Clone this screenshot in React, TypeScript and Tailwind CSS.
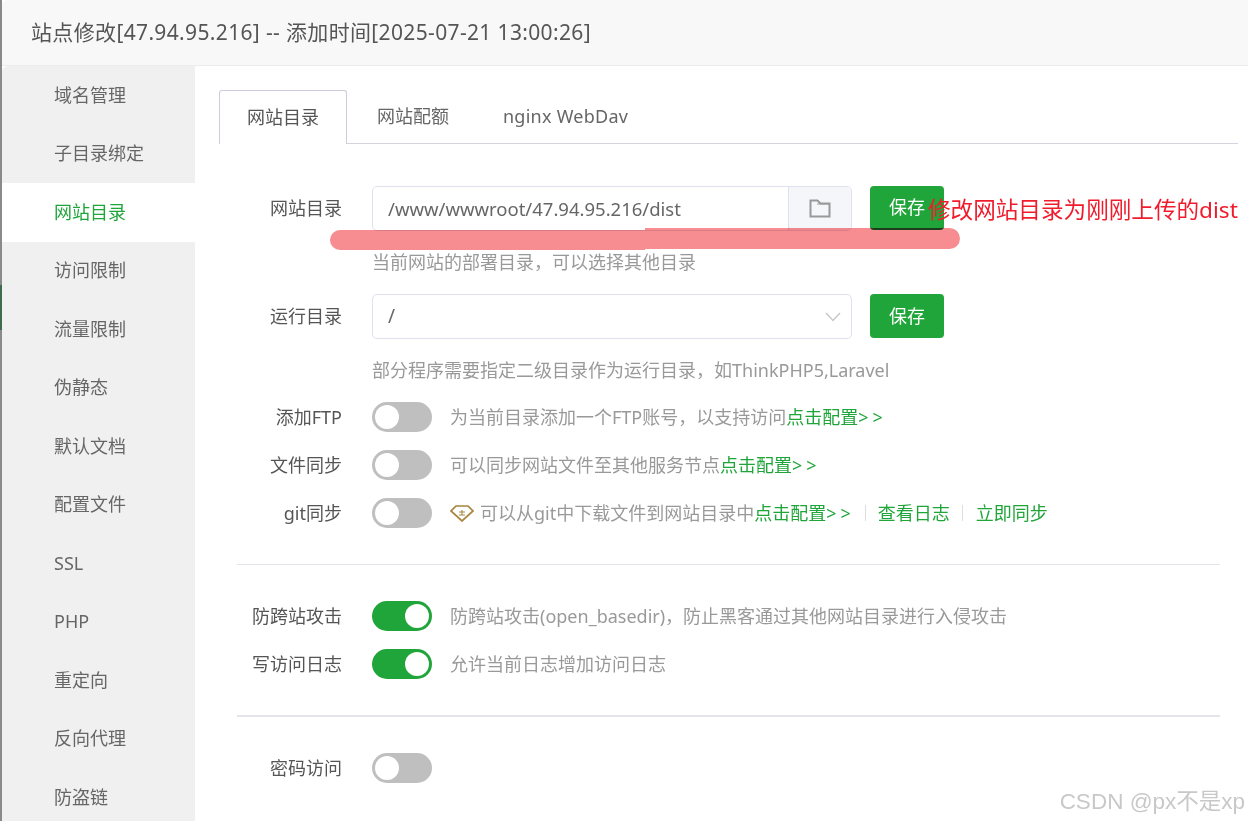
import React from "react";

const FONT = "font-['Noto_Sans','Noto_Sans_CJK_SC',sans-serif]";
const nav = ["域名管理","子目录绑定","网站目录","访问限制","流量限制","伪静态","默认文档","配置文件","SSL","PHP","重定向","反向代理","防盗链"];

function Toggle({ on }: { on?: boolean }) {
  return (
    <div className={`w-[60px] h-[30px] rounded-full flex items-center shrink-0 px-[3px] ${on ? "bg-[#20a53a] justify-end" : "bg-[#bfbfbf] justify-start"}`}>
      <div className="w-6 h-6 rounded-full bg-white" />
    </div>
  );
}

function Label({ children }: { children: React.ReactNode }) {
  return <div className="w-[123px] text-right text-[18px] text-[#555] shrink-0 mr-[30px]">{children}</div>;
}

function SaveBtn({ shade }: { shade?: boolean }) {
  return (
    <div className={`w-[74px] h-[44px] rounded bg-[#20a53a] text-white text-[18px] flex items-center justify-center ml-[18px] ${shade ? "border-b-2 border-[#1c6f2e]" : ""}`}>保存</div>
  );
}

function ToggleRow({ label, on, children }: { label: string; on?: boolean; children: React.ReactNode }) {
  return (
    <div className="flex items-center h-[48px]">
      <Label>{label}</Label>
      <Toggle on={on} />
      <div className="ml-[18px] text-[18px] text-[#999] flex items-center whitespace-nowrap">{children}</div>
    </div>
  );
}

const G = ({ children }: { children: React.ReactNode }) => <span className="text-[#20a53a]">{children}</span>;
const Arrows = () => <span className="text-[#20a53a] tracking-[4px]">&gt;&gt;</span>;

export default function App() {
  return (
    <div className={`relative w-[1248px] h-[821px] overflow-hidden bg-white pl-[2px] ${FONT}`}>
      <div className="absolute left-0 top-0 bottom-0 w-[2px] bg-[#8a8a8a]" />
      <div className="absolute left-0 top-[285px] h-[45px] w-[2px] bg-[#3f6b4f]" />
      <header className="h-[66px] bg-[#f8f8f8] border-b border-[#ececec] rounded-tl-[6px] flex items-center pl-[29px] text-[21px] tracking-[0.35px] text-[#555] whitespace-nowrap">
        站点修改[47.94.95.216] -- 添加时间[2025-07-21 13:00:26]
      </header>
      <div className="flex h-[755px]">
        <aside className="w-[193px] bg-[#f0f0f0] shrink-0 rounded-tl-[6px]">
          {nav.map((n) => (
            <div key={n} className={`h-[58.5px] flex items-center pl-[52px] text-[18px] ${n === "网站目录" ? "bg-white text-[#20a53a]" : "text-[#666]"}`}>{n}</div>
          ))}
        </aside>
        <main className="flex-1 pl-[24px] pr-[10px] pt-[24px]">
          <div className="flex h-[54px] border-b border-[#d5d3e0] text-[18px] text-[#666]">
            <div className="w-[128px] h-[54px] border border-b-0 border-[#cfcbdc] rounded-t-[3px] bg-white flex items-center justify-center text-[#555]">网站目录</div>
            <div className="w-[132px] flex items-center justify-center">网站配额</div>
            <div className="pl-[24px] flex items-center tracking-[0.25px]">nginx WebDav</div>
          </div>

          <div className="mt-[42px] flex items-start">
            <div className="flex items-center h-[45px]"><Label>网站目录</Label></div>
            <div className="w-[480px] h-[45px] border border-[#dfe1ec] rounded-[5px] flex overflow-hidden">
              <div className="flex-1 flex items-center pl-[15px] text-[18.5px] text-[#666]">/www/wwwroot/47.94.95.216/dist</div>
              <div className="w-[63px] bg-[#f5f6fa] border-l border-[#dfe1ec] flex items-center justify-center">
                <svg width="22" height="19" viewBox="0 0 22 19" fill="none" stroke="#999" strokeWidth="2"><path d="M1.5 17.5V1.5h7l3 3h9v13z" /><path d="M8 5h12" strokeWidth="1" /></svg>
              </div>
            </div>
            <SaveBtn shade />
          </div>
          <div className="ml-[153px] mt-[18px] h-[27px] text-[18px] text-[#999] leading-[27px]">当前网站的部署目录，可以选择其他目录</div>

          <div className="mt-[18px] flex items-start">
            <div className="flex items-center h-[45px]"><Label>运行目录</Label></div>
            <div className="w-[480px] h-[45px] border border-[#dfe1ec] rounded-[5px] flex items-center justify-between pl-[15px] pr-[10px] text-[19px] text-[#666]">
              <span>/</span>
              <svg width="16" height="10" viewBox="0 0 16 10" fill="none" stroke="#c8c8c8" strokeWidth="1.5"><path d="M1 1l7 7.5L15 1" /></svg>
            </div>
            <SaveBtn />
          </div>
          <div className="ml-[153px] mt-[18px] h-[27px] text-[18px] text-[#999] leading-[27px] whitespace-nowrap">部分程序需要指定二级目录作为运行目录，如ThinkPHP5,Laravel</div>

          <div className="mt-[9px]">
            <ToggleRow label="添加FTP">为当前目录添加一个FTP账号，以支持访问<G>点击配置</G><Arrows /></ToggleRow>
            <ToggleRow label="文件同步">可以同步网站文件至其他服务节点<G>点击配置</G><Arrows /></ToggleRow>
            <ToggleRow label="git同步">
              <svg width="24" height="18" viewBox="0 0 24 18" className="mr-[6px]" fill="none" stroke="#a8843f" strokeWidth="1.7"><path d="M6 2h12l5 5-11 10L1 7z" /><path d="M9 8h6M12 6v5M9 11h6" strokeWidth="1.1" /></svg>
              可以从git中下载文件到网站目录中<G>点击配置</G><Arrows />
              <span className="w-px h-4 bg-[#ddd] ml-[10px] mr-[12px]" /><G>查看日志</G>
              <span className="w-px h-4 bg-[#ddd] mx-[12.5px]" /><G>立即同步</G>
            </ToggleRow>
          </div>

          <div className="ml-[18px] w-[983px] mt-[27px] border-t border-[#e4e4ea]" />

          <div className="mt-[27px]">
            <ToggleRow label="防跨站攻击" on>防跨站攻击(open_basedir)，防止黑客通过其他网站目录进行入侵攻击</ToggleRow>
            <ToggleRow label="写访问日志" on>允许当前日志增加访问日志</ToggleRow>
          </div>

          <div className="ml-[18px] w-[983px] mt-[27px] border-t-2 border-[#e4e4ea]" />

          <div className="mt-[27px]">
            <ToggleRow label="密码访问"><span /></ToggleRow>
          </div>
        </main>
      </div>

      <div className="absolute left-[330px] top-[230px] w-[315px] h-[20px] rounded-l-full bg-[#f78c91] mix-blend-multiply" />
      <div className="absolute left-[645px] top-[228px] w-[315px] h-[21px] rounded-r-full bg-[#f78c91] mix-blend-multiply" />
      <div className="absolute left-[928px] top-[195px] text-[22.6px] leading-[30px] text-[#f01c2c] whitespace-nowrap">修改网站目录为刚刚上传的dist</div>
      <div className="absolute right-[3px] top-[787px] text-[22.5px] leading-[30px] text-[#c8c8c8] whitespace-nowrap font-['Liberation_Sans','Noto_Sans_CJK_SC',sans-serif]">CSDN @px不是xp</div>
    </div>
  );
}
